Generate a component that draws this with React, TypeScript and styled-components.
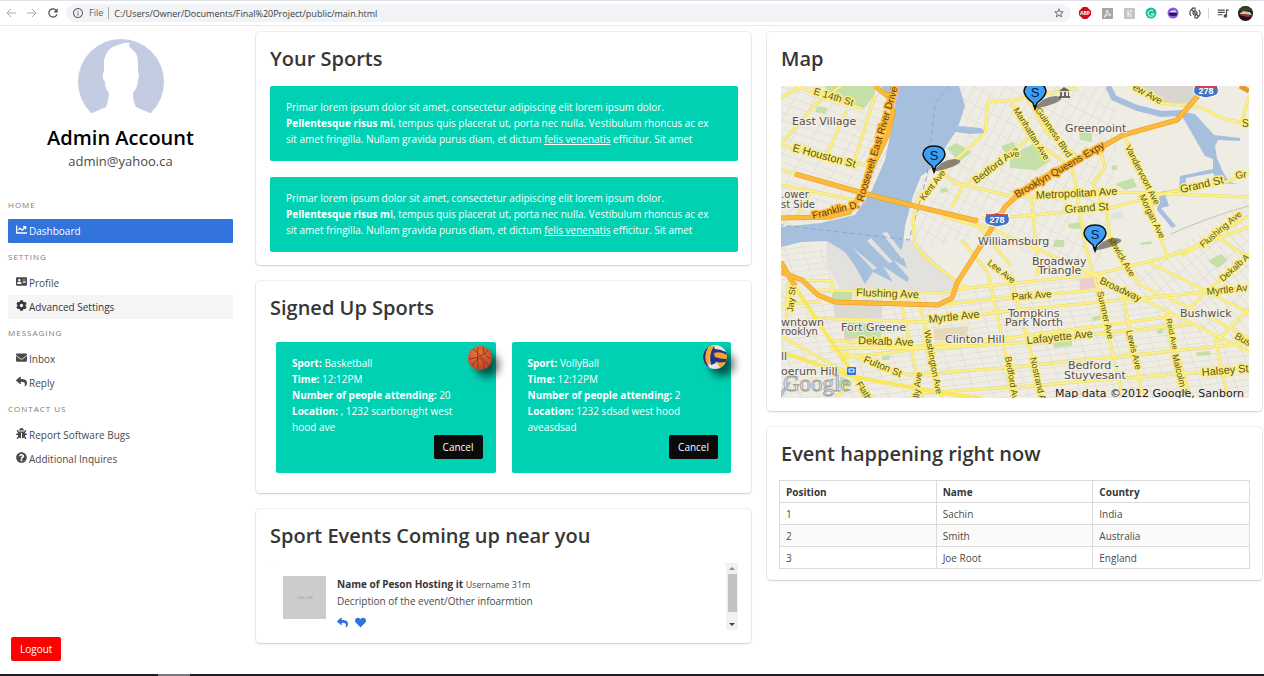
import React from 'react';
import styled, { createGlobalStyle } from 'styled-components';
import {
  FaChartLine,
  FaAddressCard,
  FaCog,
  FaEnvelope,
  FaReply,
  FaBug,
  FaQuestionCircle,
  FaHeart,
} from 'react-icons/fa';
import { MdRefresh, MdInfoOutline, MdStarBorder, MdQueueMusic } from 'react-icons/md';

const GlobalStyle = createGlobalStyle`
  *, *::before, *::after { box-sizing: border-box; }
  body {
    margin: 0;
    background: #fff;
    color: #4a4a4a;
    font-family: "Open Sans", "Noto Sans", sans-serif;
    font-size: 10px;
    line-height: 16px;
  }
  button, input { font-family: inherit; }
  strong { font-weight: 700; }
`;

const Page = styled.div`
  display: flex;
  flex-direction: column;
  min-height: 100vh;
`;

/* ---------- browser bar ---------- */

const BrowserBar = styled.header`
  display: flex;
  align-items: center;
  height: 26px;
  padding: 0 8px 0 0;
  border-top: 1px solid #dee1e6;
  border-bottom: 1px solid #e8e9eb;
`;

const NavButton = styled.button<{ $dim?: boolean }>`
  display: flex;
  justify-content: center;
  width: 21px;
  padding: 0;
  border: 0;
  background: none;
  color: ${(p) => (p.$dim ? '#a9abae' : '#4c4f53')};
`;

const AddressPill = styled.div`
  flex: 1;
  display: flex;
  align-items: center;
  gap: 5px;
  height: 18px;
  margin-left: 3px;
  padding: 0 6px;
  border-radius: 9px;
  background: #f1f3f4;
  color: #5f6368;
  font-size: 9px;
`;

const SchemeLabel = styled.label`
  padding-right: 5px;
  border-right: 1px solid #a5a8ab;
  line-height: 12px;
`;

const AddressInput = styled.input`
  flex: 1;
  min-width: 0;
  padding: 0;
  border: 0;
  background: none;
  outline: none;
  color: #3c4043;
  font-size: 9px;
`;

const Extensions = styled.div`
  display: flex;
  align-items: center;
  margin-left: 3px;
`;

const ExtensionButton = styled.button`
  display: flex;
  align-items: center;
  justify-content: center;
  width: 22px;
  height: 18px;
  padding: 0;
  border: 0;
  background: none;
  color: #4c4f53;
`;

const BarDivider = styled.span`
  width: 1px;
  height: 11px;
  margin: 0 3px 0 2px;
  background: #d5d7da;
`;

/* ---------- page layout ---------- */

const Columns = styled.div`
  flex: 1;
  display: grid;
  grid-template-columns: 232fr 495fr 495fr;
  gap: 16px;
  padding: 6px 2px 0 8px;
`;

const Column = styled.main`
  display: flex;
  flex-direction: column;
  gap: 16px;
  min-width: 0;
`;

const Taskbar = styled.footer`
  height: 2px;
  padding-left: 158px;
  background: #1d1f22;
`;

const TaskbarTab = styled.div`
  width: 32px;
  height: 2px;
  background: #77797c;
`;

/* ---------- sidebar ---------- */

const Sidebar = styled.aside`
  display: flex;
  flex-direction: column;
  padding: 7px 7px 13px 0;
`;

const Account = styled.div`
  display: flex;
  flex-direction: column;
  align-items: center;
  height: 152px;
`;

const AccountName = styled.h1`
  margin: 1px 0 0;
  color: #000;
  font-size: 20px;
  font-weight: 600;
  line-height: 24px;
`;

const AccountMail = styled.p`
  margin: 2px 0 0;
  font-size: 13px;
  line-height: 18px;
`;

const MenuLabel = styled.p`
  margin: 0;
  padding: 9px 0;
  color: #7a7a7a;
  font-size: 8px;
  letter-spacing: 1px;
  line-height: 10px;
  text-transform: uppercase;
`;

const MenuList = styled.ul`
  margin: 0;
  padding: 0;
  list-style: none;
`;

const MenuLink = styled.a<{ $state?: 'active' | 'hover' }>`
  display: flex;
  gap: 1px;
  padding: 4px 6px;
  border-radius: 1px;
  background: ${(p) => (p.$state === 'active' ? '#3273dc' : p.$state === 'hover' ? '#f5f5f5' : 'transparent')};
  color: ${(p) => (p.$state === 'active' ? '#fff' : p.$state === 'hover' ? '#363636' : '#4a4a4a')};
  text-decoration: none;
`;

const MenuIcon = styled.span`
  display: flex;
  justify-content: center;
  width: 14px;
  svg { width: auto; height: 11px; margin-top: 1px; }
`;

const SolidButton = styled.button<{ $color: string }>`
  height: 24px;
  padding: 0 9px;
  border: 0;
  border-radius: 2px;
  background: ${(p) => p.$color};
  color: #fff;
  font-size: 10px;
  line-height: 16px;
`;

const LogoutRow = styled.div`
  margin-top: auto;
  padding-left: 3px;
`;

/* ---------- cards ---------- */

const Card = styled.section`
  padding: 13px 13px 13px 14px;
  border-radius: 4px;
  background: #fff;
  box-shadow: 0 1px 2px rgba(10, 10, 10, 0.14), 0 0 0 1px rgba(10, 10, 10, 0.06);
`;

const CardTitle = styled.h2`
  margin: 2px 0 15px;
  color: #363636;
  font-size: 20px;
  font-weight: 600;
  line-height: 24px;
`;

const Notice = styled.div`
  padding: 13px 20px 14px 16px;
  border-radius: 2px;
  background: #00d1b2;
  color: #fff;
  & + & { margin-top: 16px; }
  a { color: inherit; text-decoration: underline; }
`;

const SportGrid = styled.div`
  display: grid;
  grid-template-columns: 1fr 1fr;
  gap: 16px;
  padding: 7px 7px 7px 6px;
`;

const SportTile = styled.article`
  position: relative;
  display: flex;
  flex-direction: column;
  padding: 13px 13px 14px 16px;
  border-radius: 2px;
  background: #00d1b2;
  color: #fff;
  ${SolidButton} { align-self: flex-end; }
`;

const SportText = styled.p`
  margin: 0;
  padding-right: 20px;
`;

const BallBadge = styled.span`
  position: absolute;
  top: 3px;
  right: 3px;
  display: flex;
  filter: drop-shadow(7px 7px 4px rgba(0, 0, 0, 0.6));
`;

const FeedScroller = styled.div`
  display: flex;
  height: 67px;
  overflow: hidden;
`;

const FeedItem = styled.article`
  flex: 1;
  display: flex;
  gap: 11px;
  height: 90px;
  padding: 13px;
  border-radius: 4px;
  box-shadow: 0 5px 10px -1px rgba(10, 10, 10, 0.1), 0 0 0 1px rgba(10, 10, 10, 0.03);
`;

const Thumb = styled.div`
  display: flex;
  align-items: center;
  justify-content: center;
  width: 43px;
  height: 43px;
  background: #ccc;
  color: #969696;
  font-size: 4px;
`;

const FeedText = styled.p`
  margin: 0 0 8px;
  strong { color: #363636; }
  small { font-size: 9px; }
`;

const FeedActions = styled.div`
  display: flex;
  gap: 7px;
  a { display: flex; color: #3273dc; }
`;

const ScrollTrack = styled.div`
  display: flex;
  flex-direction: column;
  align-items: center;
  width: 12px;
  background: #f1f1f1;
`;

const ScrollThumb = styled.div`
  width: 9px;
  height: 38px;
  background: #c1c1c1;
`;

const ScrollArrow = styled.svg`
  width: 12px;
  height: 11px;
  &:last-child { margin-top: auto; }
`;

const MapDrawing = styled.svg`
  display: block;
  width: 100%;
  height: auto;
`;

const TableWrap = styled.div`
  margin: -1px -1px -2px -2px;
`;

const DataTable = styled.table`
  width: 100%;
  border-collapse: collapse;
  table-layout: fixed;
  th, td {
    height: 22px;
    padding: 2px 6px;
    border: 1px solid #dbdbdb;
    text-align: left;
    line-height: 16px;
  }
  th { color: #363636; font-weight: 700; }
  tbody tr:nth-child(even) { background: #fafafa; }
`;

/* ---------- drawings ---------- */

function Avatar() {
  return (
    <svg width="86" height="86" viewBox="0 0 86 86" role="img" aria-label="Profile picture">
      <circle cx="43" cy="43" r="43" fill="#c3cce0" />
      <path
        d="M0 86 L0 80 L14 74 L28 68 Q31 61 31 54 Q27 50 27 43 Q24 39 25 34 L26 33 V22 Q28 8 43 5 Q49 3 52 4 Q49 7 54 10 Q60 15 60 23 V33 Q62 35 60 41 Q60 48 55 54 Q55 62 58 68 L72 74 L86 80 V86 Z"
        fill="#fff"
      />
    </svg>
  );
}

function Basketball() {
  return (
    <svg width="25" height="25" viewBox="0 0 25 25" aria-hidden="true">
      <defs>
        <radialGradient id="orange" cx="40%" cy="30%" r="75%">
          <stop offset="0" stopColor="#ef7045" />
          <stop offset="1" stopColor="#b9451f" />
        </radialGradient>
      </defs>
      <circle cx="12" cy="13" r="12" fill="url(#orange)" />
      <g fill="none" stroke="#7a3118" strokeWidth=".8">
        <path d="M10 2 Q9 12 10 24" />
        <path d="M5 4 Q12 9 21 21" />
        <path d="M1 14 Q13 13 20 5" />
        <path d="M15 2 Q15 11 23 14" />
        <path d="M4 21 Q7 14 13 13 Q17 18 16 24" />
      </g>
    </svg>
  );
}

function Volleyball() {
  return (
    <svg width="25" height="25" viewBox="0 0 25 25" aria-hidden="true">
      <clipPath id="ball"><circle cx="12" cy="12" r="12" /></clipPath>
      <g clipPath="url(#ball)">
        <rect width="25" height="25" fill="#e9e6df" />
        <path d="M7 0 Q-2 12 8 25 L-2 22 V3 Z" fill="#2c2f86" />
        <path d="M7 1 Q1 8 3 17 L7 20 Q5 10 11 1 Z" fill="#f5a623" />
        <path d="M11 1 Q5 10 8 20 L13 18 Q9 10 12 5 Z" fill="#2c2f86" />
        <path d="M11 4 Q18 3 25 8 V18 Q18 19 10 16 Z" fill="#2c2f86" />
        <path d="M11 8 Q18 6 24 10 V14 Q17 14 12 12 Z" fill="#f5a623" />
        <path d="M14 18 Q20 17 24 17 L17 23 Z" fill="#f5a623" />
        <path d="M13 0 Q20 1 23 7 Q17 4 12 4 Z" fill="#e9e6df" />
      </g>
    </svg>
  );
}

type Pt = string;

const streets: Pt[] = [
  '14,0 82,23', '0,59 92,81', '0,84 16,88', '0,99 74,114', '66,24 47,67', '34,19 0,58', '94,9 72,80', '60,0 34,19', '0,12 20,0', '30,105 14,134',
  '164,84 137,114 132,134 134,159 144,171 177,197 187,202 234,197 312,189 386,171 468,141',
  '161,86 204,47 207,16 232,14 296,2',
  '171,121 181,101 234,64 247,52',
  '161,87 174,97 234,111 336,106 468,111',
  '200,132 229,131 329,122 389,106 442,97 468,87',
  '229,14 249,51 284,77 292,84 304,159 317,204 342,312',
  '246,11 266,47 301,74',
  '319,62 324,81 312,97 326,127 329,154 359,199 430,232 468,252',
  '344,52 362,90 366,106 382,159 387,171',
  '352,0 379,17 419,21 446,34 468,37', '468,10 461,36',
  '197,137 252,161 317,191 400,232 468,266',
  '36,204 161,207 187,202', '31,232 144,236 234,224 426,206 468,201',
  '47,216 157,219 234,211 316,204', '47,254 127,261 234,251 386,231', '49,262 160,262 234,257 410,238',
  '49,262 127,289 234,281 468,257', '60,272 234,252', '141,307 234,301 468,282',
  '119,211 141,312', '137,211 161,312', '181,154 207,187 234,312', '229,187 262,312', '250,109 254,150 257,190',
  '341,204 362,312', '386,227 409,312', '434,251 447,312', '369,177 429,207 468,227', '406,224 468,167',
  '0,250 74,291 55,312', '20,194 51,195 51,208', '0,218 40,216', '8,190 5,236', '468,130 400,170', '435,150 468,172',
  '161,130 197,140 230,180', '468,222 434,257',
];

const greens: Pt[] = [
  '44,0 94,0 94,8 82,24 48,12', '166,62 176,57 190,66 178,76', '220,60 232,56 238,66 226,70',
  '298,46 311,44 311,56 299,54', '229,70 252,58 270,74 256,84 229,82', '334,98 352,92 356,101 344,104',
  '51,205 71,206 71,214 51,214', '64,236 102,238 100,252 64,252', '427,175 440,168 447,174 437,182',
  '274,154 283,154 283,161 272,161', '272,257 291,254 291,260 273,262', '375,245 382,242 382,247 377,248',
  '415,266 429,265 430,269 416,270', '311,231 319,229 320,234 312,235', '36,20 47,22 44,28 34,26',
  '159,103 166,101 167,106 160,107', '331,80 336,79 336,84 331,84', '287,138 300,136 300,143 288,142',
  '101,270 110,269 108,274 101,274', '60,290 71,296 64,306 56,300', '359,157 370,155 371,158 360,159',
];

const orangeRoads: Pt[] = [
  '94,0 108,11 112,26 107,48 90,84 82,106 68,126 48,131 0,132',
  '14,88 100,112 197,135',
  '424,0 416,11 396,34 342,49 319,62 272,86 242,104 224,121 199,161 176,197 171,212 157,219 54,216 37,209 21,194 0,186',
  '0,176 14,200',
];

type MapLabel = [text: string, x: number, y: number, angle: number, size: number];

const areaLabels: MapLabel[] = [
  ['East Village', 11, 39, 0, 11], ['.ower', 0, 112, 0, 10], ['st Side', 0, 122, 0, 10],
  ['Greenpoint', 284, 46, 0, 11], ['Williamsburg', 197, 159, 0, 11], ['Broadway', 251, 179, 0, 11],
  ['Triangle', 257, 188, 0, 11], ['Tompkins', 227, 231, 0, 11], ['Park North', 224, 240, 0, 11],
  ['Bushwick', 399, 231, 0, 11], ['Bedford -', 287, 283, 0, 11], ['Stuyvesant', 283, 293, 0, 11],
  ['Clinton Hill', 164, 257, 0, 11], ['Fort Greene', 60, 245, 0, 11], ['wntown', 0, 240, 0, 11],
  ['rooklyn', 0, 249, 0, 10], ['ll', 0, 274, 0, 11], ['oerum Hill', 0, 289, 0, 11],
];

const roadLabels: MapLabel[] = [
  ['E 14th St', 32, 8, 17, 10], ['E Houston St', 11, 65, 15, 11], ['Kent Ave', 143, 115, -52, 9],
  ['Bedford Ave', 195, 98, -37, 10], ['Manhattan Ave', 232, 24, 58, 9], ['Guinness Blvd', 254, 24, 56, 9],
  ['ew Ave', 351, 3, 29, 10], ['Vandervoort Ave', 344, 61, 63, 9], ['Morgan Ave', 358, 110, 64, 9],
  ['Metropolitan Ave', 255, 113, -3, 11], ['Grand St', 284, 127, -4, 11], ['Grand St', 400, 107, -13, 11],
  ['Gr', 455, 93, -10, 10], ['Flushing Ave', 422, 162, -40, 9], ['Flushing Ave', 75, 210, 2, 11], ['Lee Ave', 206, 178, 38, 9],
  ['Myrtle Ave', 148, 237, -6, 11], ['Myrtle Av', 426, 209, -6, 10], ['Dekalb Ave', 77, 258, 2, 11],
  ['Dekalb A', 442, 196, -42, 9], ['Fulton St', 82, 276, 22, 10], ['Washington Ave', 143, 245, 79, 9],
  ['Park Ave', 231, 214, -4, 10], ['Lafayette Ave', 246, 258, -6, 11], ['Sumner Ave', 316, 206, 77, 9],
  ['Broadway', 318, 197, 25, 10], ['Lewis Ave', 345, 245, 76, 9], ['Reid Ave', 385, 233, 78, 8],
  ['Malcolm X', 391, 269, 76, 9], ['Nostrand Ave', 249, 272, 77, 9], ['Halsey St', 421, 290, -5, 11],
  ['Jay St', 12, 226, -84, 9], ['Flatb', 75, 298, 58, 9], ['Bedford Ave', 224, 271, 80, 9],
  ['Bus', 453, 252, 30, 10], ['shwick Ave', 327, 153, 60, 9], ['S', 461, 41, 0, 10], ['ve', 229, 71, 0, 9], ['lly Ave', 138, 312, -84, 9],
];

const highwayLabels: MapLabel[] = [
  ['Franklin D.', 32, 133, -14, 10], ['Roosevelt East River Drive', 82, 116, -73, 10],
  ['Brooklyn Queens Expy', 236, 112, -30, 10],
];

function Label({ item: [text, x, y, angle, size] }: { item: MapLabel }) {
  return (
    <text x={x} y={y} fontSize={size} transform={`rotate(${angle} ${x} ${y})`}>
      {text}
    </text>
  );
}

function Pin({ x, y }: { x: number; y: number }) {
  return (
    <g transform={`translate(${x} ${y})`}>
      <path d="M0 17 Q6 5 20 4 Q30 5 24 9 Q18 13 3 16 Z" fill="#333" opacity=".55" />
      <path d="M0 17 L-2 11 Q-11 4 -11 -1 Q-10 -9 0 -9 Q10 -9 11 -1 Q11 4 2 11 Z" fill="#3c9ff5" stroke="#111" strokeWidth="1.500" />
      <path d="M-2 13 L0 18 L2 13 Z" fill="#111" />
      <text x="0" y="5" fontSize="13" textAnchor="middle" fill="#071c38">S</text>
    </g>
  );
}

function Shield({ x, y }: { x: number; y: number }) {
  return (
    <g transform={`translate(${x} ${y})`}>
      <path d="M-11 -5 Q-6 -4 0 -6 Q6 -4 11 -5 Q15 4 8 6 L0 8 L-8 6 Q-15 4 -11 -5 Z" fill="#3f74c4" stroke="#fff" strokeWidth="1" />
      <path d="M-11 -5 Q-6 -4 0 -6 Q6 -4 11 -5 L11 -3 H-11 Z" fill="#d0404a" />
      <text x="0" y="4" fontSize="9" fontWeight="700" textAnchor="middle" fill="#fff">278</text>
    </g>
  );
}

function CityMap() {
  return (
    <MapDrawing viewBox="0 0 468 312" role="img" aria-label="Map of Brooklyn" fontFamily='"Liberation Sans", sans-serif'>
      <defs>
        <pattern id="gridWest" width="18" height="8" patternUnits="userSpaceOnUse" patternTransform="rotate(18) skewX(-12)">
          <path d="M0 0 H18 M0 0 V8" fill="none" stroke="#d9d5cd" strokeWidth="1" />
        </pattern>
        <pattern id="gridMid" width="9" height="15" patternUnits="userSpaceOnUse" patternTransform="rotate(28)">
          <path d="M0 0 H9 M0 0 V15" fill="none" stroke="#dcd8d0" strokeWidth="1" />
        </pattern>
        <pattern id="gridSouth" width="17" height="6" patternUnits="userSpaceOnUse" patternTransform="rotate(-7) skewX(12)">
          <path d="M0 0 H17 M0 0 V6" fill="none" stroke="#d8d5ca" strokeWidth="1" />
        </pattern>
        <pattern id="gridEast" width="8" height="19" patternUnits="userSpaceOnUse" patternTransform="rotate(-40)">
          <path d="M0 0 H8 M0 0 V19" fill="none" stroke="#d9d5cd" strokeWidth="1" />
        </pattern>
        <clipPath id="mapFrame"><rect width="468" height="312" /></clipPath>
      </defs>
      <g clipPath="url(#mapFrame)">
        <rect width="468" height="312" fill="#efece4" />
        <path d="M0 0 H110 V140 H0 Z" fill="url(#gridWest)" />
        <path d="M130 0 H335 V70 L317 191 L200 150 L130 165 Z" fill="url(#gridMid)" />
        <path d="M0 205 L234 197 L312 189 L468 266 V312 H0 Z" fill="url(#gridSouth)" />
        <path d="M318 191 L386 171 L468 110 V266 Z" fill="url(#gridEast)" />
        <path d="M0 160 H50 V200 H0 Z" fill="url(#gridSouth)" />
        <path d="M354 0 H426 L410 18 L378 16 Z" fill="#d9d6d0" />
        <path d="M45 154 H132 L176 196 L168 206 L60 204 L46 180 Z" fill="#e3e1dd" />
        <path d="M51 214 H101 V232 H54 Z" fill="#dbd9d2" />
        <path d="M152 243 L187 240 L186 252 L154 255 Z" fill="#e5dbbb" />
        <path d="M298 193 L316 191 L317 201 L300 204 Z" fill="#ebcdcc" />
        <path d="M62 244 L72 243 L75 253 L64 254 Z" fill="#ebcdcf" />
        <path d="M330 127 L342 125 V132 L330 134 Z" fill="#dbe6df" />
        {greens.map((g) => <polygon key={g} points={g} fill="#c5dfa9" />)}
        <g fill="#a5bfdd">
          <path d="M100 0 L114 19 L111 41 L104 74 L91 104 L74 129 L40 137 L0 141 V161 L20 156 L46 155 L64 166 L74 180 L84 198 L92 186 L112 196 L102 180 L126 196 L128 192 L112 174 L126 182 L120 165 L122 158 L124 140 L132 110 L140 90 L154 80 L167 57 L176 44 L184 20 L178 0 Z" />
          <path d="M178 40 L200 42 L205 47 L190 48 L174 46 Z" />
          <path d="M398 25 L414 28 L433 49 L459 52 V55 L437 54 L434 60 L436 72 L441 84 L448 96 L457 98 L437 97 L432 87 L405 92 L404 104 L384 108 L388 120 L380 122 L395 140 L391 142 L376 124 L379 106 L398 103 L399 90 L432 83 L432 73 L424 70 Z" />
          <path d="M0 305 L8 295 L10 297 L0 312 Z" />
        </g>
        <polyline points="327,0 333,12 356,22 380,28 402,27" fill="none" stroke="#a5bfdd" strokeWidth="6" />
        <g fill="#e3e1dd">
          <path d="M86 155 L90 152 L112 176 L108 177 Z" />
          <path d="M101 147 L106 146 L124 170 L121 173 Z" />
          <path d="M70 160 L96 182 L92 184 Z" />
        </g>
        <polyline points="168,0 154,18 146,90 128,154 0,139" fill="none" stroke="#8ba8d3" strokeWidth="1" strokeDasharray="5 3" />
        <path d="M390 148 Q430 130 468 120" fill="none" stroke="#c4c2bc" strokeWidth="1" />
        <g fill="none" strokeLinejoin="round">
          {streets.map((s) => <polyline key={s} points={s} stroke="#e9da6b" strokeWidth="3" />)}
          {streets.map((s) => <polyline key={s} points={s} stroke="#fdf184" strokeWidth="2" />)}
          <polyline points="14,201 74,291 91,312" stroke="#f9e75c" strokeWidth="4" />
          <polyline points="0,266 74,291 161,307 200,312" stroke="#f9e75c" strokeWidth="4" />
          {orangeRoads.map((s) => <polyline key={s} points={s} stroke="#e59a29" strokeWidth="5" />)}
          {orangeRoads.map((s) => <polyline key={s} points={s} stroke="#fdb938" strokeWidth="4" />)}
        </g>
        <g fill="#5a5326" stroke="#fbee7c" strokeWidth="3" paintOrder="stroke" strokeLinejoin="round">
          {roadLabels.map((l) => <Label key={l[0] + l[1]} item={l} />)}
        </g>
        <g fill="#5e3c0a" stroke="#fdb938" strokeWidth="3" paintOrder="stroke" strokeLinejoin="round">
          {highwayLabels.map((l) => <Label key={l[0]} item={l} />)}
        </g>
        <g fontFamily='"DejaVu Sans", sans-serif' fill="#55504a" stroke="#f3f0e8" strokeWidth="2" paintOrder="stroke" strokeLinejoin="round">
          {areaLabels.map((l) => <Label key={l[0]} item={l} />)}
        </g>
        <path d="M278 5 L283 1 L289 5 Z M279 6 H281 V10 H279 Z M283 6 H285 V10 H283 Z M287 6 H288 V10 H287 Z M278 10 H289 V12 H278 Z" fill="#6b6660" />
        <rect x="66" y="281" width="9" height="8" rx="1" fill="#2b77d8" />
        <path d="M68 283 H73 V286 H68 Z" fill="none" stroke="#fff" strokeWidth="1" />
        <Shield x={216} y={133} />
        <Shield x={425} y={4} />
        <path d="M459 0 L468 5" stroke="#e59a29" strokeWidth="5" />
        <Pin x={254} y={6} />
        <Pin x={153} y={69} />
        <Pin x={314} y={148} />
        <text x="2" y="305" fontFamily='"Liberation Serif", serif' fontSize="23" fill="#f2f0ea" stroke="#a5a39e" strokeWidth="1">
          Google
        </text>
        <text x="274" y="311" fontFamily='"DejaVu Sans", sans-serif' fontSize="11" fill="#1b1b1b" stroke="#f3f0e8" strokeWidth="1" paintOrder="stroke">
          Map data ©2012 Google, Sanborn
        </text>
      </g>
    </MapDrawing>
  );
}

/* ---------- content ---------- */

type MenuItem = { label: string; icon: React.ReactNode; state?: 'active' | 'hover' };

const menu: { title: string; items: MenuItem[] }[] = [
  { title: 'Home', items: [{ label: 'Dashboard', icon: <FaChartLine />, state: 'active' }] },
  {
    title: 'Setting',
    items: [
      { label: 'Profile', icon: <FaAddressCard /> },
      { label: 'Advanced Settings', icon: <FaCog />, state: 'hover' },
    ],
  },
  {
    title: 'Messaging',
    items: [
      { label: 'Inbox', icon: <FaEnvelope /> },
      { label: 'Reply', icon: <FaReply /> },
    ],
  },
  {
    title: 'Contact us',
    items: [
      { label: 'Report Software Bugs', icon: <FaBug /> },
      { label: 'Additional Inquires', icon: <FaQuestionCircle /> },
    ],
  },
];

const signedUp = [
  { sport: 'Basketball', time: '12:12PM', people: 20, location: ', 1232 scarborught west hood ave', ball: <Basketball /> },
  { sport: 'VollyBall', time: '12:12PM', people: 2, location: '1232 sdsad west hood aveasdsad', ball: <Volleyball /> },
];

const rows = [
  ['1', 'Sachin', 'India'],
  ['2', 'Smith', 'Australia'],
  ['3', 'Joe Root', 'England'],
];

function SportNotice() {
  return (
    <Notice>
      Primar lorem ipsum dolor sit amet, consectetur adipiscing elit lorem ipsum dolor.{' '}
      <strong>Pellentesque risus mi</strong>, tempus quis placerat ut, porta nec nulla. Vestibulum rhoncus ac ex sit amet
      fringilla. Nullam gravida purus diam, et dictum <a href="#felis">felis venenatis</a> efficitur. Sit amet
    </Notice>
  );
}

function Browser() {
  return (
    <BrowserBar>
      <NavButton $dim aria-label="Back"><svg width="12" height="12" viewBox="0 0 12 12" fill="none" stroke="currentColor"><path d="M11 6 H2 M6 2 L2 6 L6 10" /></svg></NavButton>
      <NavButton $dim aria-label="Forward"><svg width="12" height="12" viewBox="0 0 12 12" fill="none" stroke="currentColor"><path d="M1 6 H10 M6 2 L10 6 L6 10" /></svg></NavButton>
      <NavButton aria-label="Reload"><MdRefresh size={14} /></NavButton>
      <AddressPill>
        <MdInfoOutline size={12} />
        <SchemeLabel htmlFor="address">File</SchemeLabel>
        <AddressInput id="address" defaultValue="C:/Users/Owner/Documents/Final%20Project/public/main.html" />
        <MdStarBorder size={12} />
      </AddressPill>
      <Extensions>
        <ExtensionButton aria-label="Ad blocker">
          <svg width="12" height="12" viewBox="0 0 12 12">
            <path d="M4 0 H8 L12 4 V8 L8 12 H4 L0 8 V4 Z" fill="#c8101a" />
            <text x="6" y="8" fontSize="5" fontWeight="700" textAnchor="middle" fill="#fff">ABP</text>
          </svg>
        </ExtensionButton>
        <ExtensionButton aria-label="PDF">
          <svg width="11" height="11" viewBox="0 0 11 11">
            <rect width="11" height="11" fill="#a6a6a6" />
            <path d="M2 9 Q5 6 5 2 Q6 6 9 7 Q5 6 2 9" fill="none" stroke="#fff" strokeWidth=".8" />
          </svg>
        </ExtensionButton>
        <ExtensionButton aria-label="Coupons">
          <svg width="11" height="11" viewBox="0 0 11 11">
            <rect width="11" height="11" rx="1" fill="#c4c4c4" />
            <path d="M4 2 V9 M4 6 Q7 4 7 9 M7 2 V4" fill="none" stroke="#fff" />
          </svg>
        </ExtensionButton>
        <ExtensionButton aria-label="Grammar">
          <svg width="12" height="12" viewBox="0 0 12 12">
            <circle cx="6" cy="6" r="5.500" fill="#15c39a" />
            <path d="M8 4 A3 3 0 1 0 9 7 H6" fill="none" stroke="#fff" />
          </svg>
        </ExtensionButton>
        <ExtensionButton aria-label="Clock">
          <svg width="12" height="12" viewBox="0 0 12 12">
            <circle cx="6" cy="6" r="5.500" fill="#8f5bd8" />
            <path d="M2 6 H10 V8 Q9 9 6 9 Q3 9 2 8 Z" fill="#241b4d" />
            <path d="M3 5 Q5 3 6 4 L8 3 L9 5 Z" fill="#f2ecff" />
          </svg>
        </ExtensionButton>
        <ExtensionButton aria-label="Sync">
          <svg width="12" height="12" viewBox="0 0 12 12" fill="none" stroke="currentColor" strokeWidth="1.200">
            <path d="M5 1 A5 5 0 0 0 2 9 M7 11 A5 5 0 0 0 10 3 M3 1 H6 V4 M9 11 H6 V8 M2 2 L10 10" />
            <circle cx="6" cy="6" r="2" />
          </svg>
        </ExtensionButton>
        <BarDivider />
        <ExtensionButton aria-label="Media"><MdQueueMusic size={14} /></ExtensionButton>
        <ExtensionButton aria-label="Account">
          <svg width="15" height="15" viewBox="0 0 15 15">
            <clipPath id="me"><circle cx="7.500" cy="7.500" r="7.500" /></clipPath>
            <g clipPath="url(#me)">
              <rect width="15" height="15" fill="#1b1513" />
              <rect width="15" height="5" fill="#37401f" />
              <path d="M1 8 L5 5 L12 6 L14 9 Z" fill="#c9c5c4" />
              <path d="M1 9 L8 8 L14 10 L10 11 Z" fill="#c22a22" />
            </g>
          </svg>
        </ExtensionButton>
      </Extensions>
    </BrowserBar>
  );
}

export default function App() {
  return (
    <Page>
      <GlobalStyle />
      <Browser />
      <Columns>
        <Sidebar>
          <Account>
            <Avatar />
            <AccountName>Admin Account</AccountName>
            <AccountMail>admin@yahoo.ca</AccountMail>
          </Account>
          <nav>
            {menu.map((group) => (
              <React.Fragment key={group.title}>
                <MenuLabel>{group.title}</MenuLabel>
                <MenuList>
                  {group.items.map((item) => (
                    <li key={item.label}>
                      <MenuLink href="#menu" $state={item.state}>
                        <MenuIcon>{item.icon}</MenuIcon>
                        {item.label}
                      </MenuLink>
                    </li>
                  ))}
                </MenuList>
              </React.Fragment>
            ))}
          </nav>
          <LogoutRow>
            <SolidButton $color="#ff0000">Logout</SolidButton>
          </LogoutRow>
        </Sidebar>

        <Column>
          <Card>
            <CardTitle>Your Sports</CardTitle>
            <SportNotice />
            <SportNotice />
          </Card>
          <Card>
            <CardTitle>Signed Up Sports</CardTitle>
            <SportGrid>
              {signedUp.map((s) => (
                <SportTile key={s.sport}>
                  <SportText>
                    <strong>Sport:</strong> {s.sport}
                    <br />
                    <strong>Time:</strong> {s.time}
                    <br />
                    <strong>Number of people attending:</strong> {s.people}
                    <br />
                    <strong>Location:</strong> {s.location}
                  </SportText>
                  <SolidButton $color="#0a0a0a">Cancel</SolidButton>
                  <BallBadge>{s.ball}</BallBadge>
                </SportTile>
              ))}
            </SportGrid>
          </Card>
          <Card>
            <CardTitle>Sport Events Coming up near you</CardTitle>
            <FeedScroller>
              <FeedItem>
                <Thumb>128×128</Thumb>
                <div>
                  <FeedText>
                    <strong>Name of Peson Hosting it</strong> <small>Username</small> <small>31m</small>
                    <br />
                    Decription of the event/Other infoarmtion
                  </FeedText>
                  <FeedActions>
                    <a href="#reply" aria-label="Reply"><FaReply size={11} /></a>
                    <a href="#like" aria-label="Like"><FaHeart size={11} /></a>
                  </FeedActions>
                </div>
              </FeedItem>
              <ScrollTrack aria-hidden="true">
                <ScrollArrow viewBox="0 0 12 11"><path d="M3 7 L6 4 L9 7 Z" fill="#8a8a8a" /></ScrollArrow>
                <ScrollThumb />
                <ScrollArrow viewBox="0 0 12 11"><path d="M3 4 H9 L6 7 Z" fill="#404040" /></ScrollArrow>
              </ScrollTrack>
            </FeedScroller>
          </Card>
        </Column>

        <Column as="section">
          <Card>
            <CardTitle>Map</CardTitle>
            <CityMap />
          </Card>
          <Card>
            <CardTitle>Event happening right now</CardTitle>
            <TableWrap>
              <DataTable>
                <thead>
                  <tr>
                    <th scope="col">Position</th>
                    <th scope="col">Name</th>
                    <th scope="col">Country</th>
                  </tr>
                </thead>
                <tbody>
                  {rows.map((r) => (
                    <tr key={r[0]}>
                      {r.map((c) => <td key={c}>{c}</td>)}
                    </tr>
                  ))}
                </tbody>
              </DataTable>
            </TableWrap>
          </Card>
        </Column>
      </Columns>
      <Taskbar>
        <TaskbarTab />
      </Taskbar>
    </Page>
  );
}
